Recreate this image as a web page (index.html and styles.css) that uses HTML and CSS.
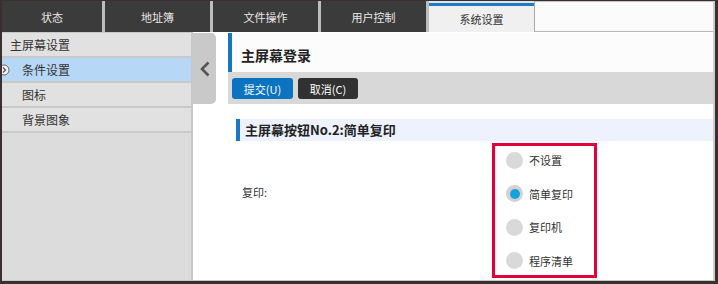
FILE: index.html
```html
<!DOCTYPE html>
<html lang="zh-CN">
<head>
<meta charset="utf-8">
<title>系统设置</title>
<link rel="stylesheet" href="styles.css">
</head>
<body>
<div class="frame">
  <div class="inner">
    <nav class="tabs">
      <div class="tab first">状态</div>
      <div class="tab">地址簿</div>
      <div class="tab">文件操作</div>
      <div class="tab">用户控制</div>
      <div class="tab active">系统设置</div>
      <div class="tab-fill"></div>
    </nav>
    <div class="body">
      <aside class="sidebar">
        <div class="side-item head">主屏幕设置</div>
        <div class="side-item sub selected">
          <svg class="side-icon" width="12" height="12" viewBox="0 0 12 12"><circle cx="6" cy="6" r="5" fill="#f4f4f4" stroke="#666" stroke-width="1"/><polyline points="5,3.5 7.5,6 5,8.5" fill="none" stroke="#555" stroke-width="1.3"/></svg>
          <span>条件设置</span>
        </div>
        <div class="side-item sub">图标</div>
        <div class="side-item sub">背景图象</div>
      </aside>
      <div class="collapse">
        <svg width="10" height="16" viewBox="0 0 10 16"><polyline points="8.5,1.5 2,8 8.5,14.5" fill="none" stroke="#555" stroke-width="2.6"/></svg>
      </div>
      <main class="main">
        <div class="page-title">主屏幕登录</div>
        <div class="toolbar">
          <button class="btn primary">提交(U)</button>
          <button class="btn dark">取消(C)</button>
        </div>
        <div class="section">主屏幕按钮No.2:简单复印</div>
        <div class="form-row">
          <div class="label">复印:</div>
          <div class="radio-box">
            <label class="radio"><span class="dot"></span>不设置</label>
            <label class="radio"><span class="dot checked"></span>简单复印</label>
            <label class="radio"><span class="dot"></span>复印机</label>
            <label class="radio"><span class="dot"></span>程序清单</label>
          </div>
        </div>
      </main>
    </div>
  </div>
</div>
</body>
</html>
```

FILE: styles.css
```css
* { box-sizing: border-box; }
html, body { margin: 0; padding: 0; background: #fff; }
body { font-family: "Noto Sans CJK SC", "Noto Sans", sans-serif; color: #333; }

.frame {
  width: 718px;
  height: 284px;
  border-style: solid;
  border-color: #3a3030;
  border-width: 1px 3px 3px 2px;
  overflow: hidden;
}
.inner {
  height: 100%;
  border-right: 2px solid #cdcdcd;
  border-bottom: 1px solid #c8c8c8;
  display: flex;
  flex-direction: column;
}

/* tabs */
.tabs {
  display: flex;
  height: 31px;
  flex: none;
  background: #e4e4e4;
}
.tab {
  width: 108px;
  background: #3b3b3b;
  border-right: 3px solid #bdbdbd;
  color: #e8e8e8;
  font-size: 11px;
  display: flex;
  align-items: center;
  justify-content: center;
}
.tab.first { width: 103px; padding-right: 0; }
.tab.active {
  width: 105px;
  border-right: none;
  margin-top: 2px;
  border-top: 3px solid #1c7cc8;
  background: #f0f0f0;
  color: #333;
  padding-bottom: 1px;
}
.tab-fill {
  flex: 1;
  background: #fbfbfb;
  border-top: 1px solid #c2c2c2;
  border-bottom: 1px solid #b8b8b8;
  border-left: 1px solid #a8a8a8;
}

/* body */
.body {
  flex: 1;
  display: flex;
  min-height: 0;
}
.sidebar {
  width: 191px;
  flex: none;
  background: #dcdcdc;
  border-top: 1px solid #c8c8c8;
  border-right: 2px solid #c8c8c8;
  overflow: hidden;
}
.side-item {
  height: 25px;
  border-bottom: 2px solid #c9c9c9;
  background: #e1e1e1;
  font-size: 12px;
  color: #333;
  display: flex;
  align-items: center;
}
.side-item.head { padding-left: 8px; }
.side-item.sub { padding-left: 20px; }
.side-item.selected {
  background: #b7d7f7;
  padding-left: 0;
}
.side-icon {
  margin-left: -4px;
  margin-right: 12px;
  flex: none;
}

.collapse {
  width: 23px;
  height: 71px;
  margin-top: 1px;
  flex: none;
  background: #c9c9c9;
  border-radius: 0 5px 5px 0;
  display: flex;
  align-items: center;
  justify-content: center;
}

/* main */
.main {
  flex: 1;
  margin-left: 12px;
  display: flex;
  flex-direction: column;
}
.page-title {
  margin-top: 1px;
  height: 39px;
  background: #fcfcfc;
  border-left: 4px solid #1677c0;
  padding: 4px 0 0 9px;
  font-size: 14px;
  font-weight: bold;
  color: #222;
  display: flex;
  align-items: center;
}
.toolbar {
  height: 32px;
  background: #d8d8d8;
  padding-left: 4px;
  display: flex;
  align-items: center;
  gap: 5px;
}
.btn {
  height: 21px;
  width: 61px;
  border: none;
  border-radius: 3px;
  color: #fff;
  font-family: inherit;
  font-size: 11px;
  padding: 0;
  margin-top: 1px;
}
.btn.primary { background: #0b73bf; }
.btn.dark { background: #313131; width: 60px; }

.section {
  margin: 15px 0 0 8px;
  height: 22px;
  background: #edf2fd;
  border-left: 4px solid #1a78c2;
  padding-left: 5px;
  font-size: 13px;
  font-weight: bold;
  color: #222;
  line-height: 22px;
}

.form-row {
  display: flex;
  margin-top: 2px;
}
.label {
  width: 250px;
  margin-left: 14px;
  padding-top: 41px;
  font-size: 11px;
  line-height: 16px;
  color: #333;
}
.radio-box {
  width: 105px;
  height: 135px;
  border: 3px solid #e3003b;
  padding-left: 11px;
  display: flex;
  flex-direction: column;
  justify-content: space-between;
}
.radio {
  height: 28px;
  display: flex;
  align-items: center;
  gap: 6px;
  font-size: 11px;
  color: #333;
}
.dot {
  width: 17px;
  height: 17px;
  border-radius: 50%;
  background: #d9d9d9;
  flex: none;
  display: flex;
  align-items: center;
  justify-content: center;
}
.dot.checked { background: #d2d2d2; }
.dot.checked::after {
  content: "";
  width: 10px;
  height: 10px;
  border-radius: 50%;
  background: #14a4dc;
}
```
